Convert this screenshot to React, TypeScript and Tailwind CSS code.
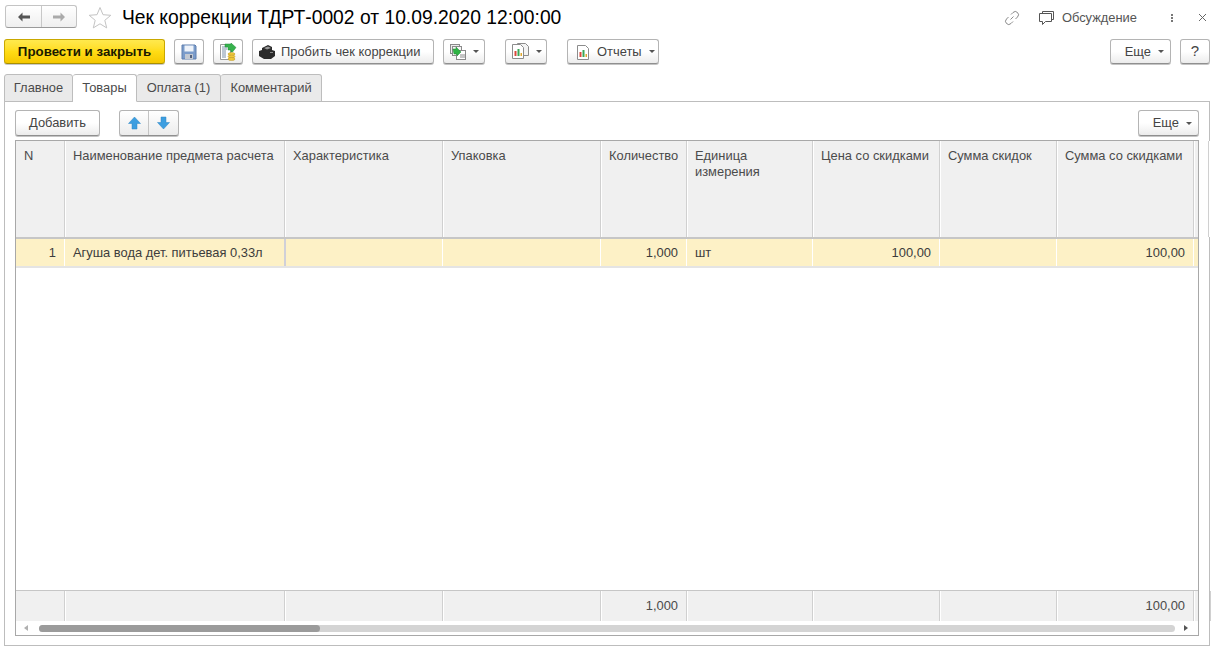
import React from "react";

const columns = [
  { title: "N" },
  { title: "Наименование предмета расчета" },
  { title: "Характеристика" },
  { title: "Упаковка" },
  { title: "Количество" },
  { title: "Единица измерения" },
  { title: "Цена со скидками" },
  { title: "Сумма скидок" },
  { title: "Сумма со скидками" },
  { title: "" },
];

const gridCols =
  "grid grid-cols-[49px_220px_158px_158px_86px_126px_127px_117px_137px_1fr]";

const row = [
  { text: "1", right: true },
  { text: "Агуша вода дет. питьевая 0,33л", current: true },
  { text: "" },
  { text: "" },
  { text: "1,000", right: true },
  { text: "шт" },
  { text: "100,00", right: true },
  { text: "" },
  { text: "100,00", right: true },
  { text: "" },
];

const totals = ["", "", "", "", "1,000", "", "", "", "100,00", ""];

function Caret() {
  return (
    <span className="inline-block w-0 h-0 border-x-[3px] border-x-transparent border-t-[3px] border-t-[#555]" />
  );
}

function Btn({ className = "", children }: { className?: string; children?: React.ReactNode }) {
  return (
    <div
      className={
        "flex items-center rounded-[3px] border border-[#b4b4b4] border-b-[#8f8f8f] bg-gradient-to-b from-white via-white to-[#ececec] shadow-[0_1px_0_#c4c4c4] text-[#444] " +
        className
      }
    >
      {children}
    </div>
  );
}

function SaveIcon() {
  return (
    <svg width="16" height="16" viewBox="0 0 16 16">
      <path d="M1 1h13l1 1v13H1z" fill="#7b9ccb" stroke="#5f7fae" strokeWidth="1" />
      <rect x="3.500" y="1.500" width="9" height="6" fill="#eef3fa" />
      <rect x="4" y="10" width="8" height="5" fill="#c3c9d2" />
      <rect x="9" y="11" width="2" height="3" fill="#56627a" />
    </svg>
  );
}

function PostIcon() {
  return (
    <svg width="18" height="18" viewBox="0 0 18 18">
      <path d="M1.500 1.500h10v15h-10z" fill="#fff" stroke="#9a9a9a" />
      <path d="M3 4h5M3 6h5M3 8h4M3 10h4M3 12h4M3 14h4" stroke="#7b8fa8" />
      <path d="M6 1h6v-1l5 4.500-3.500 4.500H12V7l-3 0V4H6z" fill="#37b24d" stroke="#1f8a3a" strokeWidth="0.5" />
      <ellipse cx="12.500" cy="11" rx="3.500" ry="1.500" fill="#f0c93a" stroke="#b8922a" strokeWidth="0.5" />
      <ellipse cx="12.500" cy="13.500" rx="3.500" ry="1.500" fill="#f0c93a" stroke="#b8922a" strokeWidth="0.5" />
      <ellipse cx="12.500" cy="16" rx="3.500" ry="1.500" fill="#f0c93a" stroke="#b8922a" strokeWidth="0.5" />
    </svg>
  );
}

function PrinterIcon() {
  return (
    <svg width="16" height="14" viewBox="0 0 16 14">
      <path d="M3 3l6-3 4 2v3l3 1v5l-4 3H5l-5-3V6l3-1z" fill="#2b2b2b" />
      <path d="M5 3l4-1.500L12 3 8 4.500z" fill="#9b9b9b" />
      <rect x="11" y="7" width="3" height="1" fill="#888" />
    </svg>
  );
}

function RelatedIcon() {
  return (
    <svg width="18" height="18" viewBox="0 0 18 18">
      <rect x="1.500" y="1.500" width="9" height="9" fill="#eee" stroke="#8a8a8a" />
      <rect x="3.500" y="3.500" width="9" height="9" fill="#f6f6f6" stroke="#8a8a8a" />
      <rect x="7.500" y="7.500" width="9" height="9" fill="#fff" stroke="#8a8a8a" />
      <path d="M11 12h5M11 14h5" stroke="#8a8a8a" />
      <path d="M4 6l3 0 0-2 5 5-4 4 0-2-3 0z" fill="#2fb344" stroke="#1d8a34" strokeWidth="0.5" />
    </svg>
  );
}

function ChartPage() {
  return (
    <g>
      <path d="M1.500 1.500h8l3 3v11h-11z" fill="#fff" stroke="#8c8c8c" />
      <rect x="3.500" y="8" width="2" height="5" fill="#d9483b" />
      <rect x="6.500" y="6" width="2" height="7" fill="#3aa655" />
      <rect x="9.500" y="10" width="1.500" height="3" fill="#e0a82e" />
    </g>
  );
}

function ReportsIcon() {
  return (
    <svg width="19" height="17" viewBox="0 0 19 17">
      <g transform="translate(5 -1)">
        <path d="M1.500 1.500h8l3 3v9h-11z" fill="#f4f4f4" stroke="#8c8c8c" />
      </g>
      <ChartPage />
    </svg>
  );
}

function UpArrow() {
  return (
    <svg width="13" height="14" viewBox="0 0 13 14">
      <path d="M6.500 1L12.500 7.500H9V13H4V7.500H0.500z" fill="#3d9ee0" stroke="#2f86c4" strokeWidth="0.5" />
    </svg>
  );
}

function DownArrow() {
  return (
    <svg width="13" height="14" viewBox="0 0 13 14">
      <path d="M6.500 13L12.500 6.500H9V1H4V6.500H0.500z" fill="#3d9ee0" stroke="#2f86c4" strokeWidth="0.5" />
    </svg>
  );
}

export default function App() {
  return (
    <div className="w-[1224px] h-[652px] bg-white overflow-hidden font-['Liberation_Sans',Arial,sans-serif] text-[12.9px] text-[#4b4b4b] flex flex-col">
      {/* title bar */}
      <div className="h-[39px] flex items-start pt-[5px] pl-[5px] pr-[17px]">
        <div className="w-[72px] h-[23px] flex rounded-[3px] border border-[#c4c4c4] border-b-[#9a9a9a] bg-gradient-to-b from-white to-[#efefef]">
          <div className="w-[36px] flex items-center justify-center border-r border-[#c8c8c8]">
            <svg width="14" height="10" viewBox="0 0 14 10">
              <path d="M5.500 0.500L1 5l4.500 4.500V6.500H13v-3H5.500z" fill="#555" />
            </svg>
          </div>
          <div className="flex-1 flex items-center justify-center">
            <svg width="14" height="10" viewBox="0 0 14 10">
              <path d="M8.500 0.500L13 5 8.500 9.500V6.500H1v-3h7.500z" fill="#aaa" />
            </svg>
          </div>
        </div>
        <svg className="ml-[11px] mt-px" width="24" height="23" viewBox="0 0 24 23">
          <path
            d="M12 1.500l3 7.200 7.800.6-6 5 1.900 7.600L12 17.800l-6.700 4.100 1.900-7.600-6-5 7.800-.6z"
            fill="#fff"
            stroke="#c4c4c4"
          />
        </svg>
        <div className="ml-[10px] text-[19.3px] leading-[23px] text-black mt-px">
          Чек коррекции ТДРТ-0002 от 10.09.2020 12:00:00
        </div>
        <div className="ml-auto flex items-center h-[23px] mt-px">
          <svg width="16" height="16" viewBox="0 0 16 16" fill="none" stroke="#8a8a8a">
            <path d="M6.500 9.500l3-3M7 4.500l2-2a3 3 0 0 1 4.500 4.500l-2 2M9 11.500l-2 2A3 3 0 0 1 2.500 9l2-2" />
          </svg>
          <svg className="ml-[18px]" width="17" height="16" viewBox="0 0 17 16" fill="none" stroke="#555">
            <path d="M4.500 3.500v-2h11v8h-2M1.500 3.500h12v8h-6l-3 3v-3h-3z" fill="#fff" />
          </svg>
          <span className="ml-[7px] text-[#555]">Обсуждение</span>
          <div className="ml-[34px] flex flex-col gap-px">
            <span className="w-[2px] h-[2px] bg-[#777]" />
            <span className="w-[2px] h-[2px] bg-[#777]" />
            <span className="w-[2px] h-[2px] bg-[#777]" />
          </div>
          <svg className="ml-[25px]" width="9" height="9" viewBox="0 0 9 9" stroke="#666">
            <path d="M1 1l7 7M8 1l-7 7" />
          </svg>
        </div>
      </div>

      {/* command bar */}
      <div className="h-[25px] flex items-stretch pl-[4px] pr-[14px]">
        <div className="w-[161px] flex items-center justify-center rounded-[3px] border border-[#c9a800] border-b-[#a98f00] bg-gradient-to-b from-[#ffe94d] via-[#ffdc14] to-[#f5c800] shadow-[0_1px_0_#c9c9c9] text-[13.3px] font-bold text-[#1a1a00]">
          Провести и закрыть
        </div>
        <Btn className="ml-[9px] w-[30px] justify-center"><SaveIcon /></Btn>
        <Btn className="ml-[9px] w-[30px] justify-center"><PostIcon /></Btn>
        <Btn className="ml-[9px] w-[182px] pl-[6px] gap-[6px]">
          <PrinterIcon />
          <span>Пробить чек коррекции</span>
        </Btn>
        <Btn className="ml-[9px] w-[42px] justify-center gap-[6px]"><RelatedIcon /><Caret /></Btn>
        <Btn className="ml-[20px] w-[42px] justify-center gap-[6px]"><ReportsIcon /><Caret /></Btn>
        <Btn className="ml-[20px] w-[92px] pl-[8px] gap-[8px]">
          <svg width="13" height="16" viewBox="0 0 13 16"><ChartPage /></svg>
          <span>Отчеты</span>
          <span className="-ml-[1px] flex"><Caret /></span>
        </Btn>
        <Btn className="ml-auto w-[61px] justify-end pr-[6px] gap-[7px]"><span>Еще</span><Caret /></Btn>
        <Btn className="ml-[9px] w-[30px] justify-center text-[15px]">?</Btn>
      </div>

      {/* tabs */}
      <div className="mt-[10px] pl-[4px] flex h-[28px] relative z-10">
        <div className="w-[69px] flex items-center justify-center rounded-t-[3px] border border-[#bdbdbd] bg-[#eaeaea]">Главное</div>
        <div className="w-[64px] flex items-center justify-center rounded-t-[3px] border border-[#bdbdbd] border-b-white border-l-0 bg-white">Товары</div>
        <div className="w-[84px] flex items-center justify-center rounded-t-[3px] border border-[#bdbdbd] border-l-0 bg-[#eaeaea]">Оплата (1)</div>
        <div className="w-[101px] flex items-center justify-center rounded-t-[3px] border border-[#bdbdbd] border-l-0 bg-[#eaeaea]">Комментарий</div>
      </div>

      {/* tab panel */}
      <div className="ml-[4px] w-[1206px] h-[545px] -mt-px border border-[#bdbdbd] pt-[8px] px-[10px] flex flex-col">
        <div className="h-[26px] flex items-stretch">
          <Btn className="w-[85px] justify-center">Добавить</Btn>
          <div className="ml-[19px] w-[60px] flex rounded-[3px] border border-[#b4b4b4] border-b-[#8f8f8f] bg-gradient-to-b from-white to-[#ececec] shadow-[0_1px_0_#c4c4c4]">
            <div className="w-[29px] flex items-center justify-center border-r border-[#c4c4c4]"><UpArrow /></div>
            <div className="flex-1 flex items-center justify-center"><DownArrow /></div>
          </div>
          <Btn className="ml-auto w-[61px] justify-end pr-[6px] gap-[7px]"><span>Еще</span><Caret /></Btn>
        </div>

        {/* table */}
        <div className="mt-[4px] w-[1184px] h-[496px] border border-[#a8a8a8] flex flex-col">
          <div className={gridCols + " h-[98px] bg-[#f0f0f0] border-b-2 border-[#c6c6c6]"}>
            {columns.map((c, i) => (
              <div key={i} className="border-r border-[#d0d0d0] shadow-[1px_0_0_#fff] pl-[8px] pr-[6px] pt-[7px] leading-[16px]">
                {c.title}
              </div>
            ))}
          </div>
          <div className={gridCols + " h-[29px] bg-[#fdf1c6] border-b-2 border-[#e4e4e4] text-[#3c3c3c]"}>
            {row.map((c, i) => (
              <div
                key={i}
                className={
                  "px-[8px] pt-px flex items-center border-r " +
                  (c.current ? "border-[#d0d0d8] shadow-[1px_0_0_#d0d0d8] " : "border-white ") +
                  (c.right ? "justify-end" : "")
                }
              >
                {c.text}
              </div>
            ))}
          </div>
          <div className="flex-1" />
          <div className={gridCols + " h-[31px] bg-[#f0f0f0] border-t border-[#c6c6c6]"}>
            {totals.map((t, i) => (
              <div key={i} className="border-r border-[#d0d0d0] shadow-[1px_0_0_#fff] px-[8px] flex items-center justify-end">
                {t}
              </div>
            ))}
          </div>
          {/* horizontal scrollbar */}
          <div className="h-[14px] flex items-center pl-[8px] pr-[10px]">
            <span className="w-0 h-0 border-y-[3px] border-y-transparent border-r-[4px] border-r-[#b0b0b0]" />
            <div className="ml-[11px] flex-1 h-[7px] rounded-full bg-[#d4d4d4] mr-[9px]">
              <div className="w-[281px] h-[7px] rounded-full bg-[#9b9b9b]" />
            </div>
            <span className="w-0 h-0 border-y-[3px] border-y-transparent border-l-[4px] border-l-[#555]" />
          </div>
        </div>
      </div>
    </div>
  );
}
